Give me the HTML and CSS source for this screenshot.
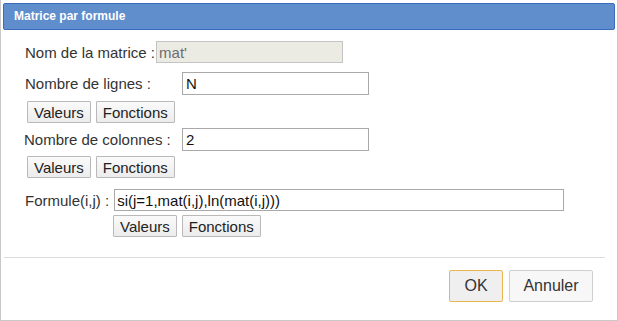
FILE: index.html
```html
<!DOCTYPE html>
<html lang="fr">
<head>
<meta charset="utf-8">
<title>Matrice par formule</title>
<link rel="stylesheet" href="styles.css">
</head>
<body>
<div class="dialog">
  <div class="titlebar">Matrice par formule</div>
  <div class="content">
    <div class="row row-name">
      <span class="label">Nom de la matrice :</span>
      <input class="field field-name" type="text" value="mat'" readonly>
    </div>
    <div class="row row-lines">
      <span class="label label-fixed">Nombre de lignes :</span>
      <input class="field field-mid" type="text" value="N">
    </div>
    <div class="btns btns-a">
      <button class="btn">Valeurs</button>
      <button class="btn">Fonctions</button>
    </div>
    <div class="row row-cols">
      <span class="label label-fixed label-cols">Nombre de colonnes :</span>
      <input class="field field-mid" type="text" value="2">
    </div>
    <div class="btns btns-b">
      <button class="btn">Valeurs</button>
      <button class="btn">Fonctions</button>
    </div>
    <div class="row row-formula">
      <span class="label">Formule(i,j) :</span>
      <input class="field field-formula" type="text" value="si(j=1,mat(i,j),ln(mat(i,j)))">
    </div>
    <div class="btns btns-c">
      <button class="btn">Valeurs</button>
      <button class="btn">Fonctions</button>
    </div>
  </div>
  <div class="footer">
    <button class="dbtn dbtn-ok">OK</button>
    <button class="dbtn">Annuler</button>
  </div>
</div>
</body>
</html>
```

FILE: styles.css
```css
* { box-sizing: border-box; }
html, body { margin: 0; padding: 0; background: #fff; }
body { font-family: "Liberation Sans", Arial, sans-serif; font-size: 15px; color: #222; }

.dialog {
  width: 618px;
  height: 321px;
  border: 1px solid #c9c9c9;
  border-top: none;
  display: flex;
  flex-direction: column;
}

.titlebar {
  margin: 3px 2px 0 2px;
  height: 27px;
  background: #608dcc;
  border: 1px solid #3b6bbd;
  border-radius: 2px;
  color: #fff;
  font-weight: bold;
  font-size: 12px;
  line-height: 25px;
  padding-left: 10px;
}

.content {
  display: flex;
  flex-direction: column;
  align-items: flex-start;
  height: 228px;
  border-bottom: 1px solid #dcdcdc;
  margin-right: 12px;
  margin-left: 3px;
  padding-left: 21px;
}

.row { display: flex; align-items: center; }
.label { white-space: nowrap; color: #333; }
.label-fixed { width: 157px; }
.label-cols { margin-left: -1px; width: 158px; }

.field {
  font-family: "Liberation Sans", Arial, sans-serif;
  font-size: 15px;
  height: 23px;
  border: 1px solid #a9a9a9;
  padding: 0 3px;
  color: #111;
  background: #fff;
  outline: none;
}
.field-name {
  margin-left: 1px;
  width: 187px;
  height: 22px;
  background: #ebebe4;
  border-color: #c4c4c4;
  color: #6d6d6d;
  padding-left: 2px;
}
.field-mid { width: 187px; }
.field-formula { margin-left: 5px; width: 450px; height: 22px; padding-left: 2px; }

.row-name { margin-top: 11px; }
.row-lines { margin-top: 9px; }
.btns { display: flex; gap: 5px; margin-left: 2px; }
.btns-a { margin-top: 6px; }
.row-cols { margin-top: 5px; }
.btns-b { margin-top: 5px; }
.row-formula { margin-top: 11px; }
.btns-c { margin-top: 4px; margin-left: 88px; }

.btn {
  font-family: "Liberation Sans", Arial, sans-serif;
  font-size: 15px;
  color: #222;
  height: 22px;
  padding: 0 6px;
  background: linear-gradient(#fafafa, #ececec);
  border: 1px solid #b9b9b9;
  border-radius: 1px;
}

.footer {
  display: flex;
  justify-content: flex-end;
  gap: 6px;
  padding: 12px 24px 0 0;
}
.dbtn {
  font-family: "Liberation Sans", Arial, sans-serif;
  font-size: 16px;
  color: #333;
  height: 32px;
  width: 84px;
  background: #f7f7f7;
  border: 1px solid #cfcfcf;
  border-radius: 2px;
}
.dbtn-ok {
  width: 54px;
  background: #efefef;
  border: 1px solid #e9b54f;
}
```
